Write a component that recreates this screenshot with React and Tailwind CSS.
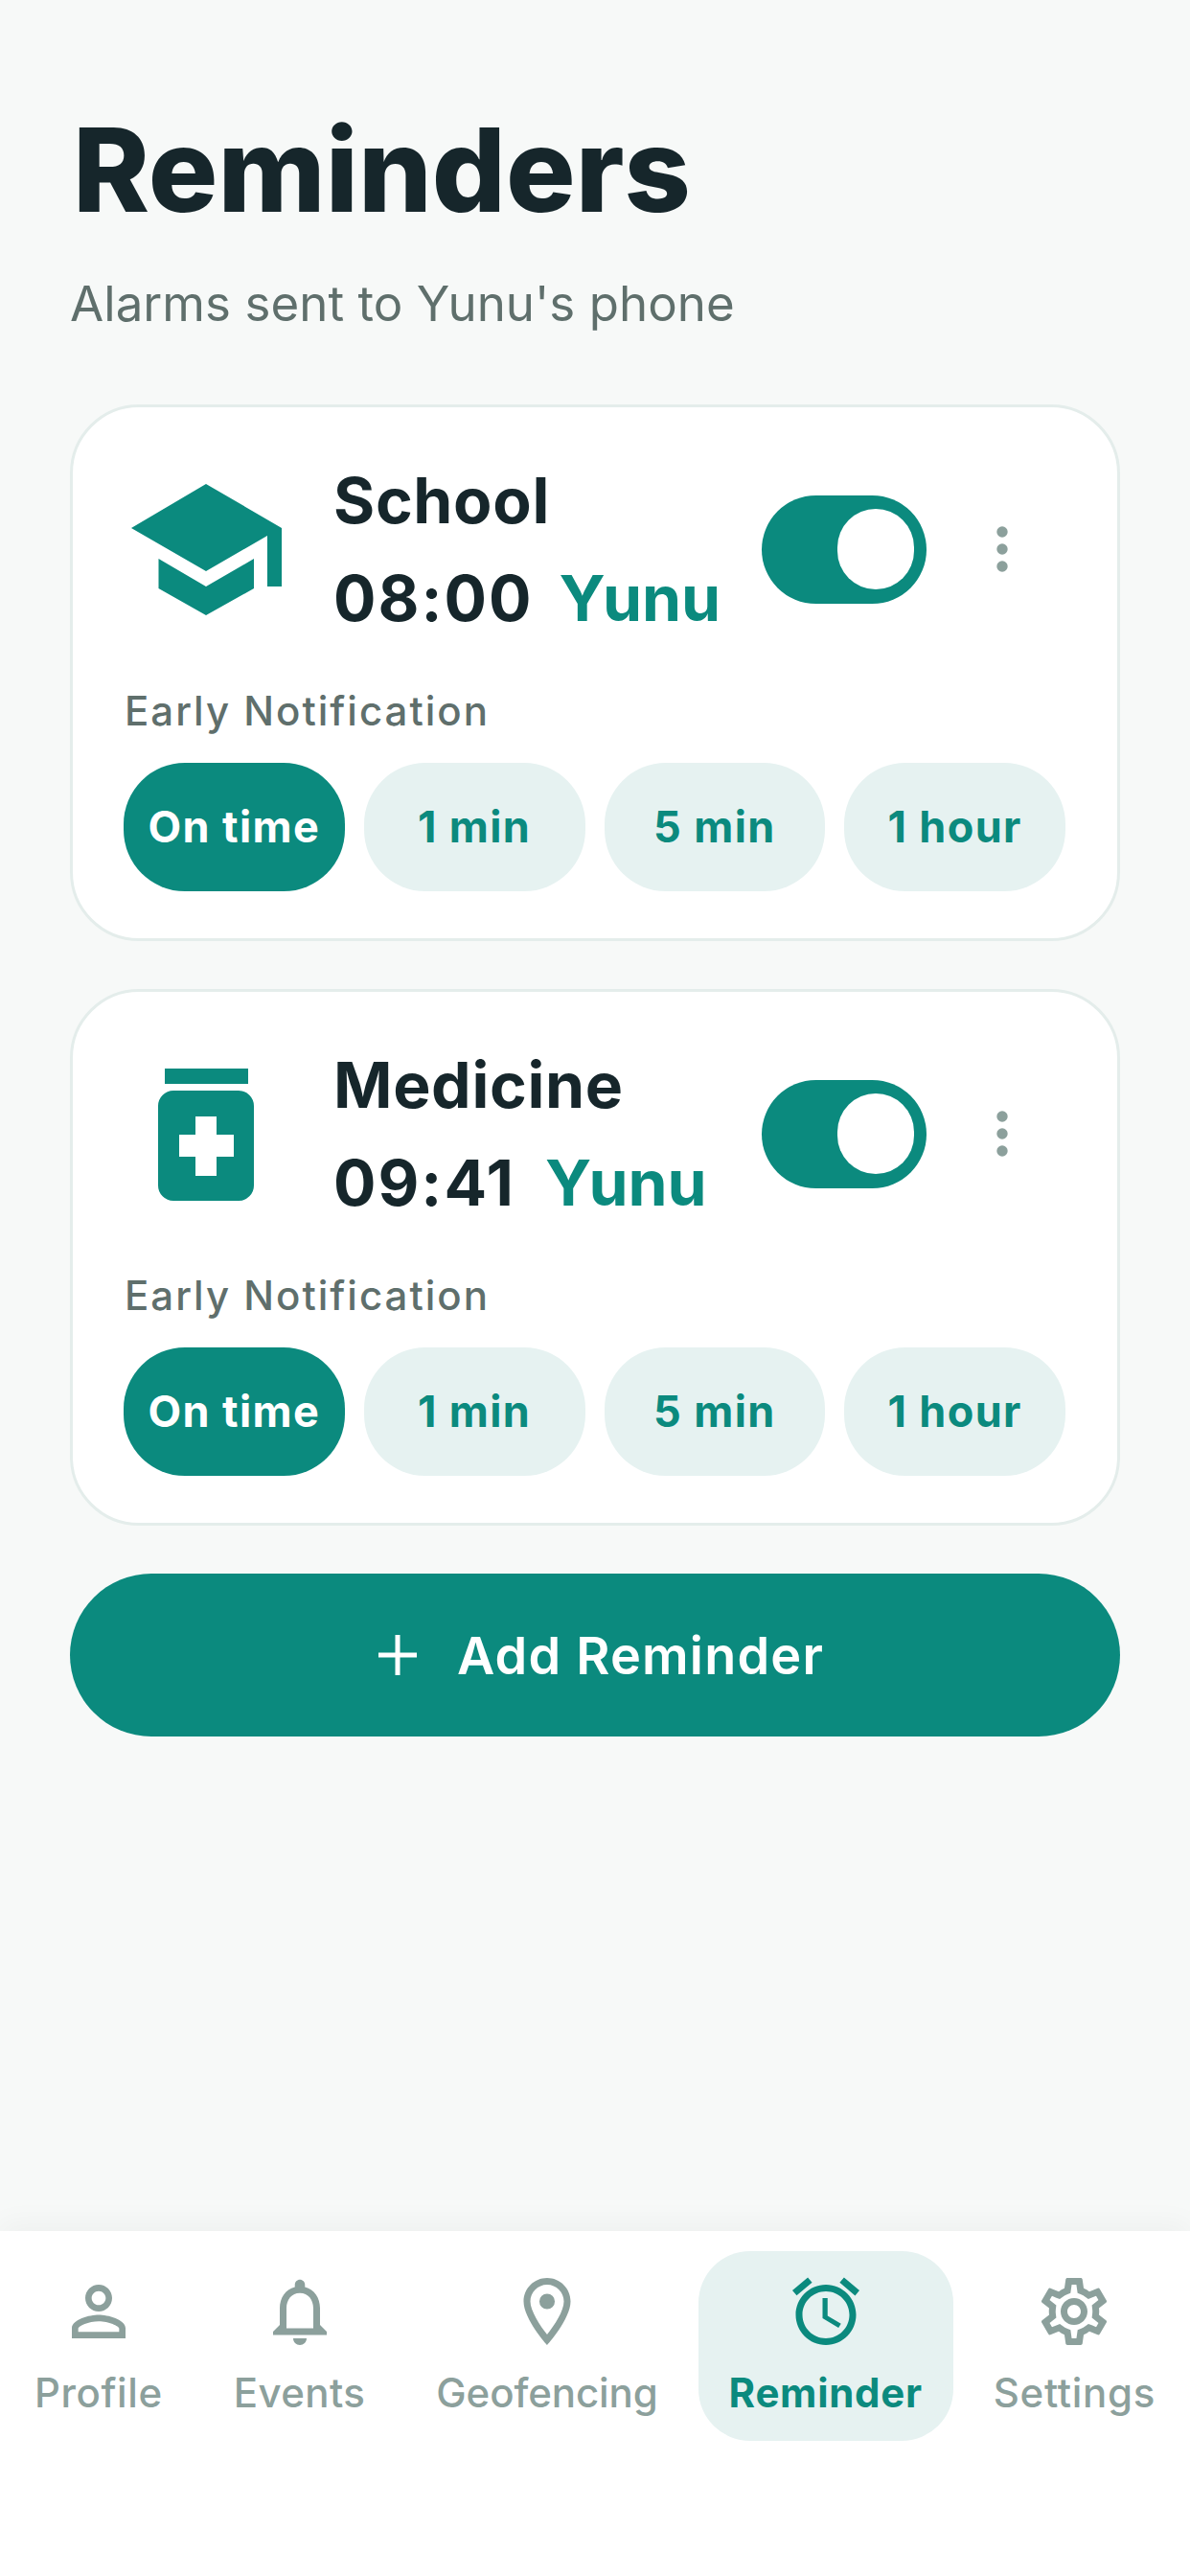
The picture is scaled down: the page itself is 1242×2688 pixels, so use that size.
const TEAL = "#0b8a7e";

function CapIcon() {
  return (
    <svg width="172" height="172" viewBox="129 488 172 172" className="shrink-0">
      <path fill={TEAL} d="M215 506 294 552V613H279V560L215 597 137 552Z" />
      <path fill={TEAL} d="M165.5 584 215 613 265 584V615L215 643 165.5 615Z" />
    </svg>
  );
}

function BottleIcon() {
  return (
    <svg width="172" height="172" viewBox="129 1098 172 172" className="shrink-0">
      <rect fill={TEAL} x="172" y="1116" width="87" height="16" />
      <path
        fill={TEAL}
        fillRule="evenodd"
        d="M181 1139H249A16 16 0 0 1 265 1155V1238A16 16 0 0 1 249 1254H181A16 16 0 0 1 165 1238V1155A16 16 0 0 1 181 1139ZM204 1166V1185H187V1208H204V1228H226V1208H244V1185H226V1166Z"
      />
    </svg>
  );
}

function Toggle() {
  return (
    <div className="w-[172px] h-[113px] rounded-full bg-[#0b8a7e] flex items-center justify-end pr-[13px] shrink-0">
      <div className="w-[80px] h-[84px] rounded-full bg-white" />
    </div>
  );
}

function Kebab() {
  return (
    <div className="w-[84px] h-[84px] ml-[37px] mr-[24px] flex items-center justify-center shrink-0">
      <svg width="12" height="48" viewBox="0 0 12 48">
        <circle cx="6" cy="6" r="5.7" fill="#8ca09c" />
        <circle cx="6" cy="24" r="5.7" fill="#8ca09c" />
        <circle cx="6" cy="42" r="5.7" fill="#8ca09c" />
      </svg>
    </div>
  );
}

function Card({ icon, title, time, nameClass }) {
  const chips = ["On time", "1 min", "5 min", "1 hour"];
  return (
    <div className="bg-white border-[3px] border-[#e4edeb] rounded-[72px] pl-[53px] pr-[54px] pt-[46px] pb-[49px]">
      <div className="flex items-center">
        {icon}
        <div className="flex-1 ml-[47px] min-w-0">
          <div className="text-[66px] leading-[102px] font-bold text-[#16262b] tracking-[0.66px]">{title}</div>
          <div className="flex items-baseline text-[66px] leading-[102px] font-bold tracking-[2px]">
            <span className="text-[#16262b]">{time}</span>
            <span className={nameClass}>Yunu</span>
          </div>
        </div>
        <Toggle />
        <Kebab />
      </div>
      <div className="mt-[41px] pl-[1px] text-[42px] leading-[52px] font-medium text-[#5f6f6c] tracking-[2px]">
        Early Notification
      </div>
      <div className="mt-[28px] flex gap-[20px]">
        {chips.map((c, i) => (
          <div
            key={c}
            className={
              i === 0
                ? "flex-1 h-[134px] rounded-[64px] bg-[#0b8a7e] text-white flex items-center justify-center text-[45px] font-bold tracking-[1.4px]"
                : "flex-1 h-[134px] rounded-[64px] bg-[#e6f2f1] text-[#0b8a7e] flex items-center justify-center text-[45px] font-bold tracking-[1.4px]"
            }
          >
            {c}
          </div>
        ))}
      </div>
    </div>
  );
}

const icons = {
  Profile:
    "M12 5.9c1.16 0 2.1.94 2.1 2.1s-.94 2.1-2.1 2.1S9.9 9.16 9.9 8s.94-2.1 2.1-2.1m0 9c2.97 0 6.1 1.46 6.1 2.1v1.1H5.9V17c0-.64 3.13-2.1 6.1-2.1M12 4C9.79 4 8 5.79 8 8s1.79 4 4 4 4-1.79 4-4-1.79-4-4-4zm0 9c-2.67 0-8 1.34-8 4v3h16v-3c0-2.66-5.33-4-8-4z",
  Events:
    "M12 22c1.1 0 2-.9 2-2h-4c0 1.1.89 2 2 2zm6-6v-5c0-3.07-1.64-5.64-4.5-6.32V4c0-.83-.67-1.5-1.5-1.5s-1.5.67-1.5 1.5v.68C7.63 5.36 6 7.92 6 11v5l-2 2v1h16v-1l-2-2zm-2 1H8v-6c0-2.48 1.51-4.5 4-4.5s4 2.02 4 4.5v6z",
  Geofencing:
    "M12 2C8.13 2 5 5.13 5 9c0 5.25 7 13 7 13s7-7.75 7-13c0-3.87-3.13-7-7-7zM7 9c0-2.76 2.24-5 5-5s5 2.24 5 5c0 2.88-2.88 7.19-5 9.88C9.92 16.21 7 11.85 7 9zM12 6.7a2.3 2.3 0 1 0 0 4.6 2.3 2.3 0 0 0 0-4.6z",
  Reminder:
    "M22 5.72l-4.6-3.86-1.29 1.53 4.6 3.86L22 5.72zM7.88 3.39L6.6 1.86 2 5.71l1.29 1.53 4.59-3.85zM12.5 8H11v6l4.75 2.85.75-1.23-4-2.37V8zM12 4c-4.97 0-9 4.03-9 9s4.03 9 9 9 9-4.03 9-9-4.03-9-9-9zm0 16c-3.87 0-7-3.13-7-7s3.13-7 7-7 7 3.13 7 7-3.13 7-7 7z",
  Settings:
    "M19.43 12.98c.04-.32.07-.64.07-.98 0-.34-.03-.66-.07-.98l2.11-1.65c.19-.15.24-.42.12-.64l-2-3.46c-.09-.16-.26-.25-.44-.25-.06 0-.12.01-.17.03l-2.49 1c-.52-.4-1.08-.73-1.69-.98l-.38-2.65C14.46 2.18 14.25 2 14 2h-4c-.25 0-.46.18-.49.42l-.38 2.65c-.61.25-1.17.59-1.69.98l-2.49-1c-.06-.02-.12-.03-.18-.03-.17 0-.34.09-.43.25l-2 3.46c-.13.22-.07.49.12.64l2.11 1.65c-.04.32-.07.65-.07.98 0 .33.03.66.07.98l-2.11 1.65c-.19.15-.24.42-.12.64l2 3.46c.09.16.26.25.44.25.06 0 .12-.01.17-.03l2.49-1c.52.4 1.08.73 1.69.98l.38 2.65c.03.24.24.42.49.42h4c.25 0 .46-.18.49-.42l.38-2.65c.61-.25 1.17-.59 1.69-.98l2.49 1c.06.02.12.03.18.03.17 0 .34-.09.43-.25l2-3.46c.12-.22.07-.49-.12-.64l-2.11-1.65zm-1.98-1.71c.04.31.05.52.05.73 0 .21-.02.43-.05.73l-.14 1.13.89.7 1.08.84-.7 1.21-1.27-.51-1.04-.42-.9.68c-.43.32-.84.56-1.25.73l-1.06.43-.16 1.13-.2 1.35h-1.4l-.19-1.35-.16-1.13-1.06-.43c-.43-.18-.83-.41-1.23-.71l-.91-.7-1.06.43-1.27.51-.7-1.21 1.08-.84.89-.7-.14-1.13c-.03-.31-.05-.54-.05-.74s.02-.43.05-.73l.14-1.13-.89-.7-1.08-.84.7-1.21 1.27.51 1.04.42.9-.68c.43-.32.84-.56 1.25-.73l1.06-.43.16-1.13.2-1.35h1.39l.19 1.35.16 1.13 1.06.43c.43.18.83.41 1.23.71l.91.7 1.06-.43 1.27-.51.7 1.21-1.07.85-.89.7.14 1.13zM12 8c-2.21 0-4 1.79-4 4s1.79 4 4 4 4-1.79 4-4-1.79-4-4-4zm0 6c-1.1 0-2-.9-2-2s.9-2 2-2 2 .9 2 2-.9 2-2 2z",
};

const labelClass = {
  Profile: "mt-[17px] text-[42px] leading-[52px] font-medium tracking-[0.6px]",
  Events: "mt-[17px] text-[42px] leading-[52px] font-medium tracking-[0.4px]",
  Geofencing: "mt-[17px] text-[42px] leading-[52px] font-medium tracking-[-0.1px]",
  Reminder: "mt-[17px] text-[42px] leading-[52px] font-bold tracking-[0.7px]",
  Settings: "mt-[17px] text-[42px] leading-[52px] font-medium tracking-[0.7px]",
};

function NavItem({ label, active }) {
  return (
    <div
      className={
        active
          ? "flex flex-col items-center h-[198px] px-[32px] rounded-[54px] bg-[#e6f2f1] text-[#0b8a7e] pt-[21px]"
          : "flex flex-col items-center h-[198px] px-[32px] rounded-[54px] text-[#8ca09c] pt-[21px]"
      }
    >
      <svg width="84" height="84" viewBox="0 0 24 24" fill="currentColor">
        <path d={icons[label]} fillRule="evenodd" />
      </svg>
      <div className={labelClass[label]}>{label}</div>
    </div>
  );
}

export default function App() {
  return (
    <div className="w-[1242px] h-[2688px] bg-[#f7f9f8] flex flex-col font-['Inter',sans-serif] overflow-hidden">
      <main className="flex-1 px-[73px] pt-[117px]">
        <h1 className="text-[121px] leading-[120px] font-extrabold text-[#16262b] pl-[3px]">Reminders</h1>
        <p className="mt-[49px] text-[51px] leading-[62px] text-[#5f6f6c] tracking-[0.05px]">Alarms sent to Yunu's phone</p>
        <div className="mt-[74px] flex flex-col gap-[50px]">
          <Card icon={<CapIcon />} title="School" time="08:00" nameClass="text-[#0b8a7e] ml-[27px] tracking-[-0.14px]" />
          <Card icon={<BottleIcon />} title="Medicine" time="09:41" nameClass="text-[#0b8a7e] ml-[31px] tracking-[-0.14px]" />
        </div>
        <button className="mt-[50px] w-full h-[170px] rounded-full bg-[#0b8a7e] text-white flex items-center justify-center pl-[13px]">
          <svg width="40" height="42" viewBox="0 0 40 42" className="mr-[42px]">
            <path d="M20 0V42M0 21H40" stroke="white" strokeWidth="5" />
          </svg>
          <span className="text-[54px] font-semibold tracking-[1.2px]">Add Reminder</span>
        </button>
      </main>
      <nav className="h-[360px] bg-white shadow-[0_-6px_30px_rgba(0,0,0,0.045)] flex justify-center gap-[10px] pt-[21px]">
        {["Profile", "Events", "Geofencing", "Reminder", "Settings"].map((l) => (
          <NavItem key={l} label={l} active={l === "Reminder"} />
        ))}
      </nav>
    </div>
  );
}
